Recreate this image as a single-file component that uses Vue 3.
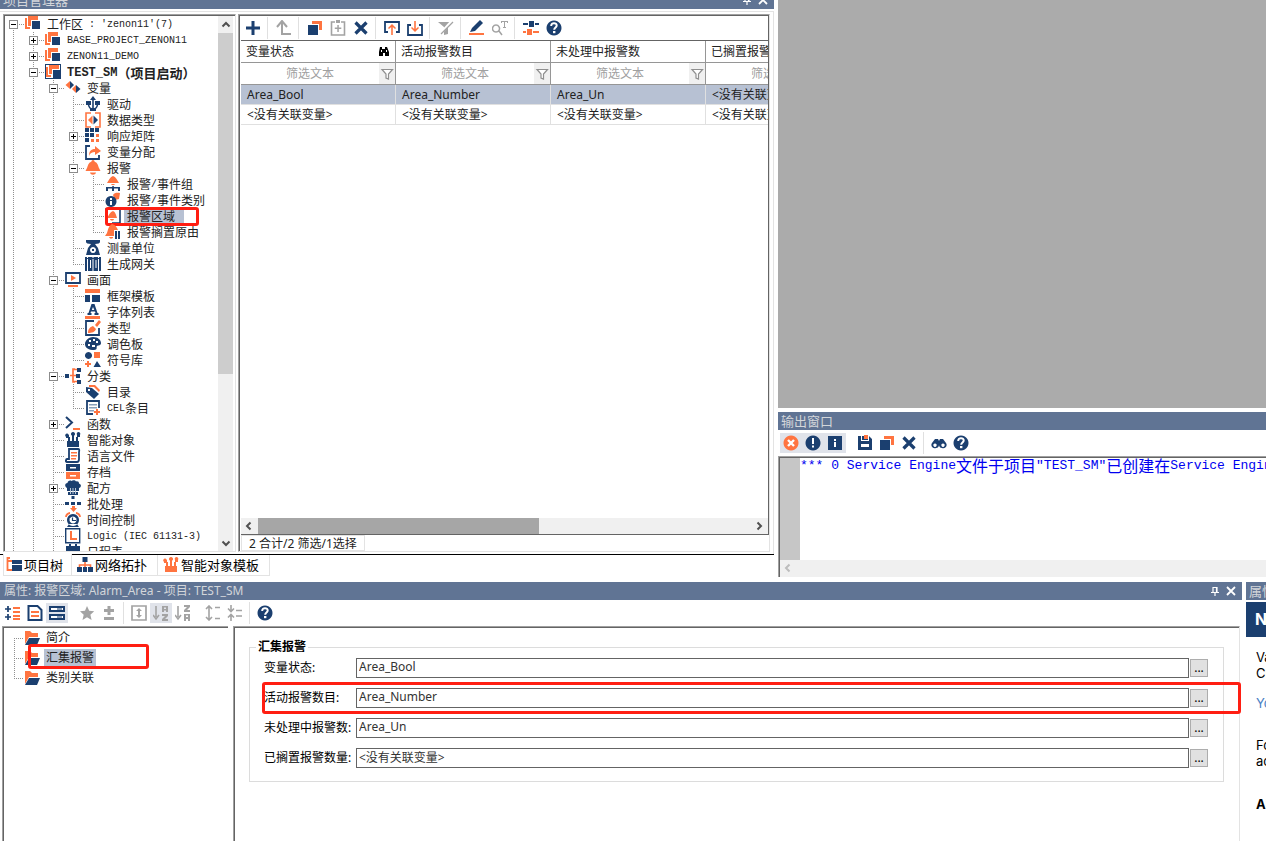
<script setup>
import { h, ref } from 'vue'

const N = '#1b3f6f'
const O = '#ff7440'
const G = '#a3a3a3'
const W = '#ffffff'

// Each icon is a list of [path, fill, stroke, strokeWidth] on a 16 x 16 grid.
const icons = {
  stack: [['M0 2h2v9h3v2H0z', O], ['M3 0h10v4H6v6H3z', O], ['M7 5h8v8H7z', N]],
  stackBox: [['M0 0h16v15H0z', N], ['M1 1h14v13H1z', W], ['M1 3h2v8h3v2H1z', O], ['M4 1h10v4H7v5H4z', O], ['M8 6h7v8H8z', N]],
  variable: [['M5 1 9 5 5 9z', N], ['M5 1v8L0.500 5z', O], ['M11 5l4.500 4-4.500 4z', N], ['M11 5v8L7 9z', O]],
  driver: [['M8 0l3 4H5z', N], ['M8 3v12M3.500 5v3c0 3 2 5 4.500 5M12.500 5v3c0 3-2 5-4.500 5', 'none', N, 1.6], ['M1 5h5v4H1zM10 5h5v4h-5zM5 13h6v2H5z', N]],
  datatype: [['M1 1h14v14H1z', W, O, 1.6], ['M6 0h4v2H6zM6 14h4v2H6z', W], ['M7.500 3.500v9L3 8z', O], ['M8.500 3.500v9L13 8z', N]],
  matrix: [['M0 0h4v4H0zM5 0h4v4H5zM10 0h4v4h-4zM0 5h4v4H0zM5 5h4v4H5zM0 10h4v4H0z', N], ['M11 6h3v3h-3zM6 11h3v3H6zM11 11h3v3h-3z', O]],
  assign: [['M5 2H1v13h13v-4', 'none', N, 1.8], ['M4 12c0-5 2-7 6-7V2l6 5-6 4V8c-3 0-5 1-6 4z', O]],
  bell: [['M8 0c1 0 1.500 1 1.500 1.500C13 3 13 6 14 8l1.500 3H.5L2 8c1-2 1-5 4.500-6.500C6.500 1 7 0 8 0zM5 12.500h6c-.5 3-5.500 3-6 0z', O]],
  bellGroup: [['M8 0c3 1 4 4 6 7H2c2-3 3-6 6-7zM6 8h4c-.5 1.500-3.500 1.500-4 0z', O], ['M7.300 10h1.500v1h6.200v4h-2v-2.500H9V15H7v-2.500H3V15H1v-4h6.300z', N]],
  bellInfo: [['M8 3c2-3 5-2 7-2l-1 6-4 1z', O], ['M6 4a5.500 5.500 0 1 0 .01 0z', N], ['M5 6h2v2H5zM5 9h2v4H5z', W]],
  bellArea: [['M1 9V1h14v14H7', 'none', N, 1.6], ['M8 3c2.500 1 3 4 4 7H2c2-3 3-6 6-7zM5 11h4c-.5 2-3.500 2-4 0z', O]],
  bellPause: [['M7 0c4 1 5 4 6 6H9v6H0l2-3c1-2 1-7 5-9zM4 13h4v1c-2 1-3 1-4-1z', O], ['M10 7h2v8h-2zM13 7h2v8h-2z', N]],
  scale: [['M1 0h14v2c0 1-2 2-5 2l3 4 2 7H1l2-7 3-4C3 4 1 3 1 2z', N], ['M8 7a3 3 0 1 0 .01 0z', W], ['M7 9h2v2H7z', N]],
  gateway: [['M0 1h2v14H0zM14 1h2v14h-2zM3 1h4.500v14H3zM8.500 1H13v14H8.500z', N], ['M5 4h1v8H5zM10.500 4h1v8h-1z', W], ['M2 2h12v1H2z', N]],
  screen: [['M1 1h14v10H1z', W, N, 1.8], ['M6 3l5 3-5 3z', O], ['M3 13h10v2H3z', O]],
  frame: [['M0 1h15v4H0z', O], ['M0 7h5v7H0zM7 7h8v7H7z', N]],
  font: [['M6.500 0h3l3 9h1v2H9.500V9h1l-.5-1.500H6L5.500 9h1v2H2.500V9h1zM8 3 6.800 6h2.500z', N], ['M0 12h15v3H0z', O]],
  style: [['M9 1H1v14h13V8', W, N, 1.8], ['M10 5l4-5 2 2-4 5zM3 13c0-4 2-6 5-7l3 3c-1 3-4 4-8 4z', O]],
  palette: [['M8 1c5 0 8 3 8 6s-3 2-4 3 1 4-3 4C4 14 0 12 0 8c0-3 3-7 8-7z', N], ['M4 4h2v2H4zM8 3h2v2H8zM11 5h2v2h-2zM3 8h2v2H3zM7 9h3v2H7z', W]],
  symbols: [['M3.500 0a3.500 3.500 0 1 0 .01 0zM12 9l4 6H8.500z', N], ['M9 0h6v6H9zM2 9h2v2h2v2H4v2H2v-2H0v-2h2z', O]],
  tree: [['M10 1H8v13h2M5 7.500h6M8 1.500h4M8 13.500h4', 'none', O, 1.7], ['M0 6h4v4H0zM12 0h4v4h-4zM11 6h4v4h-4zM12 12h4v4h-4z', N]],
  tag: [['M4 1h6l5 5-1 2-5-5H4z', O], ['M1 3l6 1 7 6-5 5L1 8z', N], ['M3 5h2v2H3z', W]],
  cel: [['M14 8V1H2v13h6', W, N, 1.8], ['M4 4h8v1.500H4zM4 7h8v1.500H4zM4 10h5v1.500H4z', '#8aa0bb'], ['M11 9h2v2h2v2h-2v2h-2v-2H9v-2h2z', O]],
  func: [['M1 1l6 5.500L1 12', 'none', N, 2], ['M8 12h7v2H8z', O]],
  smart: [['M2 9h12v6H2zM1 3h3v2h1v4H3V6H1zM7 3h2v6H7zM12 3h3v2h-2v4h-2V5h1z', N], ['M2 1.500a1.800 1.800 0 1 0 .01 0zM8 0a2 2 0 1 0 .01 0zM13.500 0a1.800 1.800 0 1 0 .01 0z', N]],
  smartOrange: [['M2 9h12v6H2zM1 3h3v2h1v4H3V6H1zM7 3h2v6H7zM12 3h3v2h-2v4h-2V5h1z', O], ['M2 1.500a1.800 1.800 0 1 0 .01 0zM8 0a2 2 0 1 0 .01 0zM13.500 0a1.800 1.800 0 1 0 .01 0z', O]],
  language: [['M4 1h9c2 0 1 2 1 4v6c0 2-1 3-2 3H2c-2 0-1-3 0-3h2z', W, N, 1.8], ['M6 4h6v1.500H6zM6 7h6v1.500H6zM6 10h5v1.500H6z', O]],
  archive: [['M1 0h14v7H1z', N], ['M1 8h14v7H1z', O], ['M5 3h6v1.500H5zM5 11h6v1.500H5z', W]],
  recipe: [['M2 8C-.5 7-.5 3 2.500 3c0-2 2.500-3 4-2 1-1 4-1 4.500.5C13 1 14 2 14 3.500c3 1 2 4 0 4.500v3H2zM3 12h10v3H3z', N], ['M5 8h1v6H5zM7.500 8h1v6h-1zM10 8h1v6h-1z', '#b9c5d4']],
  batch: [['M6.500 0h3v3h-3zM0 6h4v3H0zM6 6h4v3H6zM12 6h4v3h-4z', N], ['M7 10h3v2h2l-3.500 4L5 12h2z', O]],
  clock: [['M1 5c0-2 2-4 4-4M11 1c2 0 4 2 4 4', 'none', O, 1.8], ['M8 2a6 6 0 1 0 .01 0zM2 15l2-3h8l2 3z', N], ['M8 4.500a3.500 3.500 0 1 0 .01 0z', W], ['M7.500 5.500v3H11', 'none', N, 1.2]],
  logic: [['M0.700 0.700h14v14h-14z', W, N, 1.4], ['M5 3h2v7h5v2H5z', O]],
  schedule: [['M2 2h2V0h2v2h4V0h2v2h3v13H1V2z', N], ['M3 7h10v6H3z', W]],
  projectTree: [['M4 1H1.500v12H6M1.500 4H6', 'none', O, 1.8], ['M6 3h10v4H6zM6 8h10v6H6z', N], ['M6 7h10v1H6z', W]],
  topology: [['M8 5v5M2.500 11V8h11v3', 'none', O, 1.6], ['M5.500 0h5v5h-5zM0 10h5v5H0zM6 10h4v5H6zM11 10h5v5h-5z', N]],
  plus: [['M6.500 1h3v5.500H15v3H9.500V15h-3V9.500H1v-3h5.500z', N]],
  up: [['M1 7l5-6 5 6M6 1v13h9', 'none', G, 2]],
  copy: [['M1 5h10v10H1z', N], ['M5 1h10v9h-3V4H5z', O]],
  paste: [['M5 2H1.500v13h13V2H11', 'none', G, 1.6], ['M6 0h4v3H6zM7.300 5h1.500v2.500h2.500V9H8.800v3H7.300V9H4.800V7.500h2.500z', G]],
  cross: [['M2.500 2.500l11 11M13.500 2.500l-11 11', 'none', N, 3.2]],
  exportUp: [['M4 12H1V2h14v10h-3', 'none', N, 1.8], ['M8 4l4 4-1 1-2.200-2v8H7.200V7L5 9 4 8z', O]],
  importDown: [['M4 5H1v10h14V5h-3', 'none', N, 1.8], ['M8 12 4 8l1-1 2.200 2V1h1.600v8L11 7l1 1z', O]],
  noFilter: [['M0 2h15l-5 5v7l-4 1V7z', G], ['M1 15 14 1', 'none', W, 2.6], ['M3 14 15 2', 'none', G, 1.2]],
  pencil: [['M1 12l2-4 8-8 3 3-8 8z', N], ['M0 13h15v2H0z', O]],
  searchText: [['M4 5a3.500 3.500 0 1 0 .01 0zM7 11l3 4', 'none', G, 1.5], ['M9 1h7v2h-1V2h-2v5h1v1h-3V7h1V2h-2v1H9z', G]],
  sliders: [['M0 3h5v2H0zM6 1h5v6H6zM12 3h4v2h-4z', N], ['M0 11h3v2H0zM4 9h5v6H4zM10 11h6v2h-6z', O]],
  help: [['M8 0.500a7.500 7.500 0 1 0 .01 0z', N], ['M5.200 6c0-4 5.800-3.500 5.500-.3C10.500 7.500 8.200 7.500 8.200 9.800', 'none', W, 2], ['M7 11h2.400v2.200H7z', W]],
  error: [['M8 0.500a7.500 7.500 0 1 0 .01 0z', O], ['M5 5l6 6M11 5l-6 6', 'none', W, 2.4]],
  warn: [['M8 0.500a7.500 7.500 0 1 0 .01 0z', N], ['M7 3h2v6H7zM7 10.500h2v2H7z', W]],
  info: [['M1 1h14v14H1z', N], ['M7 4h2v2H7zM7 7h2v5H7z', W]],
  save: [['M1 1h3v5h8V1l3 3v11H1zM5 1h6v4H5z', N], ['M7 0h4v4H7z', O], ['M4 9h8v3H4z', W]],
  binoculars: [['M4 4h3l1 2 1-2h3l3 4c2 3-1 6-4 5-2 0-3-2-3-3 0 1-1 3-3 3-3 1-6-2-4-5z', N], ['M4 8.500a1.700 1.700 0 1 0 .01 0zM12 8.500a1.700 1.700 0 1 0 .01 0z', W]],
  findSmall: [['M5 3h2v2h3V3h2l2 5v4h-4V9H8v3H4V8z', '#000'], ['M6 6h1v2H6zM11 6h1v2h-1z', W]],
  funnel: [['M3 3.500h10.500L9.500 8v5l-2.500-1V8z', W, '#8f8f8f', 1.2]],
  listPlus: [['M0 4h6M3 1v6M0 12h6M3 9v6', 'none', N, 1.7], ['M8 2h7v2H8zM8 6h7v2H8zM8 10h7v2H8zM8 13h7v2H8z', O]],
  page: [['M1.500 1h9l4 4v10h-13z', W, N, 2], ['M4 6h8v2H4zM4 10h8v2H4z', O]],
  panels: [['M1 2h14v4H1zM1 10h14v4H1z', W, N, 2], ['M8 3.500h5v1H8zM8 11.500h5v1H8z', N]],
  star: [['M8 1l2.200 4.800 5 .5-3.800 3.500 1.200 5.200L8 12.300 3.500 15l1.200-5.200L1 6.300l5-.5z', G]],
  plusMinus: [['M6.500 1h3v3H13v3H9.500v3h-3V7H3V4h3.500zM3 12h10v3H3z', G]],
  expandBox: [['M1 1h14v14H1z', 'none', G, 1.7], ['M8 3l3 3H9v4h2l-3 3-3-3h2V6H5z', G]],
  sortAZ: [['M3 1v11M0 10l3 4 3-4', 'none', G, 1.6], ['M9 1h6v6h-2V5.500h-2V7H9zM11 2.500v1.500h2V2.500zM9 9h6v2l-3 3h3v2H9v-2l3-3H9z', G]],
  sortZA: [['M3 1v11M0 10l3 4 3-4', 'none', G, 1.6], ['M9 0h6v2l-3 3h3v2H9V5l3-3H9zM9 9h6v7h-2v-2h-2v2H9zM11 10.500V12h2v-1.500z', G]],
  expandAll: [['M4 2v12M1 4l3-3 3 3M1 12l3 3 3-3M10 2.500h5M10 13.500h5', 'none', G, 1.6]],
  collapseAll: [['M4 0v6M1 3.500l3 3 3-3M4 16v-6M1 12.500l3-3 3 3M9 5.500h6M9 11h6', 'none', G, 1.6]],
  folder: [['M1 1h5l2 2h6v4H5l-4 7z', O], ['M5 8h11l-3 7H1z', N]],
  pin: [['M6 4.500h4v5H6zM9.500 4.500v5M4 9.500h8M8 10v3', 'none', W, 1.2]],
  close: [['M4 4l8 8M12 4l-8 8', 'none', W, 1.8]],
  left: [['M9.500 4.500 6 8l3.500 3.500', 'none', '#505050', 2]],
  right: [['M6.500 4.500 10 8l-3.500 3.500', 'none', '#505050', 2]],
  leftPale: [['M9.500 4.500 6 8l3.500 3.500', 'none', '#bdbdbd', 2]],
  upArrow: [['M4.500 9.500 8 6l3.500 3.500', 'none', '#505050', 2]],
  downArrow: [['M4.500 6.500 8 10l3.500-3.500', 'none', '#505050', 2]],
}

const SvgIcon = (props) =>
  h(
    'svg',
    { class: 'icon', width: 16, height: 16, viewBox: '0 0 16 16', 'aria-hidden': 'true' },
    icons[props.name].map(([d, fill, stroke, width]) => h('path', { d, fill, stroke, 'stroke-width': width })),
  )
SvgIcon.props = ['name']

const treeRows = [
  { level: 0, icon: 'stack', text: "工作区 : 'zenon11'(7)", box: '-', first: true },
  { level: 1, icon: 'stack', text: 'BASE_PROJECT_ZENON11', box: '+' },
  { level: 1, icon: 'stack', text: 'ZENON11_DEMO', box: '+' },
  { level: 1, icon: 'stackBox', text: 'TEST_SM（项目启动）', box: '-', bold: true },
  { level: 2, icon: 'variable', text: '变量', box: '-' },
  { level: 3, icon: 'driver', text: '驱动' },
  { level: 3, icon: 'datatype', text: '数据类型' },
  { level: 3, icon: 'matrix', text: '响应矩阵', box: '+' },
  { level: 3, icon: 'assign', text: '变量分配' },
  { level: 3, icon: 'bell', text: '报警', box: '-' },
  { level: 4, icon: 'bellGroup', text: '报警/事件组' },
  { level: 4, icon: 'bellInfo', text: '报警/事件类别' },
  { level: 4, icon: 'bellArea', text: '报警区域', selected: true },
  { level: 4, icon: 'bellPause', text: '报警搁置原由', last: true },
  { level: 3, icon: 'scale', text: '测量单位' },
  { level: 3, icon: 'gateway', text: '生成网关', last: true },
  { level: 2, icon: 'screen', text: '画面', box: '-' },
  { level: 3, icon: 'frame', text: '框架模板' },
  { level: 3, icon: 'font', text: '字体列表' },
  { level: 3, icon: 'style', text: '类型' },
  { level: 3, icon: 'palette', text: '调色板' },
  { level: 3, icon: 'symbols', text: '符号库', last: true },
  { level: 2, icon: 'tree', text: '分类', box: '-' },
  { level: 3, icon: 'tag', text: '目录' },
  { level: 3, icon: 'cel', text: 'CEL条目', last: true },
  { level: 2, icon: 'func', text: '函数', box: '+' },
  { level: 2, icon: 'smart', text: '智能对象' },
  { level: 2, icon: 'language', text: '语言文件' },
  { level: 2, icon: 'archive', text: '存档' },
  { level: 2, icon: 'recipe', text: '配方', box: '+' },
  { level: 2, icon: 'batch', text: '批处理' },
  { level: 2, icon: 'clock', text: '时间控制' },
  { level: 2, icon: 'logic', text: 'Logic (IEC 61131-3)' },
  { level: 2, icon: 'schedule', text: '日程表' },
]

// Splits a label into Latin and Chinese runs, which use different sizes.
const runs = (text) =>
  (text.match(/[\x20-\x7e]+|[^\x20-\x7e]+/g) || []).map((t) => ({ t, latin: /^[\x20-\x7e]/.test(t) }))

// A bar divides a toolbar, a blank leaves a gap, and a star marks a pressed button.
const gridTools = ['plus', '|', 'up', '|', 'copy', 'paste', 'cross', '|', 'exportUp', 'importDown', '|', 'noFilter', '|', 'pencil', 'searchText', '|', 'sliders', 'help']
const outputTools = ['error*', 'warn*', 'info*', ' ', 'save', 'copy', 'cross', '|', 'binoculars', 'help']
const propTools = ['listPlus', 'page', 'panels*', ' ', 'star', 'plusMinus', '|', 'expandBox', 'sortAZ*', 'sortZA', ' ', 'expandAll', 'collapseAll', '|', 'help']
const parse = (list) =>
  list.map((s) => ({ sep: s === '|' || s === ' ', line: s === '|', on: s.endsWith('*'), icon: s.replace('*', '') }))

const columns = ['变量状态', '活动报警数目', '未处理中报警数', '已搁置报警数量']
const none = '<没有关联变量>'
const tableRows = [
  ['Area_Bool', 'Area_Number', 'Area_Un', none],
  [none, none, none, none],
]
const tabs = [
  { icon: 'projectTree', text: '项目树' },
  { icon: 'topology', text: '网络拓扑' },
  { icon: 'smartOrange', text: '智能对象模板' },
]
const activeTab = ref(0)
const groups = ['简介', '汇集报警', '类别关联']
const fields = ref([
  { id: 'state', label: '变量状态:', value: 'Area_Bool' },
  { id: 'active', label: '活动报警数目:', value: 'Area_Number', marked: true },
  { id: 'open', label: '未处理中报警数:', value: 'Area_Un' },
  { id: 'shelved', label: '已搁置报警数量:', value: none },
])
const message = '*** 0 Service Engine文件于项目"TEST_SM"已创建在Service Engine'
</script>

<template>
  <div class="page">
    <div class="upper">
      <section class="manager">
        <header class="title">
          <span>项目管理器</span>
          <span class="title-buttons">
            <button aria-label="固定"><SvgIcon name="pin" /></button>
            <button aria-label="关闭"><SvgIcon name="close" /></button>
          </span>
        </header>
        <div class="manager-body">
          <div class="tree-box">
            <ul class="tree">
              <li v-for="row in treeRows" :key="row.text" class="tree-row">
                <span v-for="n in row.level" :key="n" class="guide line"></span>
                <span class="guide elbow" :class="{ first: row.first, last: row.last }">
                  <button v-if="row.box" class="expander" :class="{ closed: row.box === '+' }" :aria-label="row.text"></button>
                </span>
                <SvgIcon :name="row.icon" />
                <span class="tree-label" :class="{ bold: row.bold, selected: row.selected }">
                  <span v-for="(run, i) in runs(row.text)" :key="i" :class="{ latin: run.latin }">{{ run.t }}</span>
                </span>
                <i v-if="row.selected" class="mark tree-mark"></i>
              </li>
            </ul>
            <div class="vscroll">
              <button aria-label="向上"><SvgIcon name="upArrow" /></button>
              <div class="vtrack"><div class="vthumb"></div></div>
              <button aria-label="向下"><SvgIcon name="downArrow" /></button>
            </div>
          </div>
          <div class="list-box">
            <div class="list-frame">
              <div class="tools wide">
                <template v-for="(t, i) in parse(gridTools)" :key="i">
                  <span v-if="t.sep" class="sep" :class="{ line: t.line }"></span>
                  <button v-else :aria-label="t.icon"><SvgIcon :name="t.icon" /></button>
                </template>
              </div>
              <div class="table-view">
                <table>
                  <thead>
                    <tr>
                      <th v-for="(c, i) in columns" :key="c">
                        <div class="head-cell"><span>{{ c }}</span><SvgIcon v-if="i === 0" name="findSmall" /></div>
                      </th>
                    </tr>
                    <tr>
                      <td v-for="c in columns" :key="c">
                        <div class="filter-cell">
                          <input type="text" placeholder="筛选文本" :aria-label="c" />
                          <button aria-label="筛选"><SvgIcon name="funnel" /></button>
                        </div>
                      </td>
                    </tr>
                  </thead>
                  <tbody>
                    <tr v-for="(r, i) in tableRows" :key="i" :class="{ current: i === 0 }">
                      <td v-for="(v, j) in r" :key="j">{{ v }}</td>
                    </tr>
                  </tbody>
                </table>
              </div>
              <div class="hscroll">
                <button aria-label="向左"><SvgIcon name="left" /></button>
                <div class="htrack"><div class="hthumb"></div></div>
                <button aria-label="向右"><SvgIcon name="right" /></button>
              </div>
            </div>
            <div class="status"><span>2 合计/2 筛选/1选择</span></div>
          </div>
        </div>
        <nav class="tabs">
          <button v-for="(t, i) in tabs" :key="t.text" :class="{ active: activeTab === i }" @click="activeTab = i">
            <SvgIcon :name="t.icon" /><span>{{ t.text }}</span>
          </button>
        </nav>
      </section>

      <section class="side">
        <div class="canvas"></div>
        <div class="output">
          <header class="title">输出窗口</header>
          <div class="tools">
            <template v-for="(t, i) in parse(outputTools)" :key="i">
              <span v-if="t.sep" class="sep" :class="{ line: t.line }"></span>
              <button v-else :class="{ on: t.on }" :aria-label="t.icon"><SvgIcon :name="t.icon" /></button>
            </template>
          </div>
          <div class="output-box">
            <div class="output-text">
              <div class="gutter"></div>
              <p><span v-for="(run, i) in runs(message)" :key="i" :class="{ mono: run.latin }">{{ run.t }}</span></p>
            </div>
            <div class="output-scroll"><button aria-label="向左"><SvgIcon name="leftPale" /></button></div>
          </div>
        </div>
      </section>
    </div>

    <div class="lower">
      <section class="props">
        <header class="title small">
          <span>属性: 报警区域: Alarm_Area - 项目: TEST_SM</span>
          <span class="title-buttons">
            <button aria-label="固定"><SvgIcon name="pin" /></button>
            <button aria-label="关闭"><SvgIcon name="close" /></button>
          </span>
        </header>
        <div class="tools prop-tools">
          <template v-for="(t, i) in parse(propTools)" :key="i">
            <span v-if="t.sep" class="sep" :class="{ line: t.line }"></span>
            <button v-else :class="{ on: t.on }" :aria-label="t.icon"><SvgIcon :name="t.icon" /></button>
          </template>
        </div>
        <div class="props-body">
          <ul class="groups">
            <li v-for="(g, i) in groups" :key="g">
              <span class="guide elbow" :class="{ first: i === 0, last: i === 2 }"></span>
              <SvgIcon name="folder" />
              <span class="group-label" :class="{ selected: i === 1 }">{{ g }}</span>
              <i v-if="i === 1" class="mark group-mark"></i>
            </li>
          </ul>
          <div class="form">
            <fieldset>
              <legend>汇集报警</legend>
              <div v-for="f in fields" :key="f.id" class="field">
                <label :for="f.id">{{ f.label }}</label>
                <input :id="f.id" v-model="f.value" type="text" />
                <button :aria-label="f.label">...</button>
                <i v-if="f.marked" class="mark field-mark"></i>
              </div>
            </fieldset>
          </div>
        </div>
      </section>
      <aside class="help">
        <header class="title">属性</header>
        <h2>N</h2>
        <p>Va<br />Cl</p>
        <p><a href="#">Yo</a></p>
        <p class="apart">Fo<br />ac</p>
        <h3>Al</h3>
      </aside>
    </div>
  </div>
</template>

<style>
body {
  overflow: hidden;
  background: #fff;
}
</style>

<style scoped>
* {
  box-sizing: border-box;
}
.page {
  height: 100vh;
  display: flex;
  flex-direction: column;
  overflow: hidden;
  font: 12px/16px 'Noto Sans', 'Noto Sans CJK SC', sans-serif;
  color: #222;
  background: #fff;
}
button {
  padding: 0;
  border: 0;
  background: none;
  color: inherit;
  font: inherit;
}
ul {
  list-style: none;
  margin: 0;
  padding: 0;
}
:deep(.icon) {
  display: block;
  flex: none;
}
.upper {
  flex: 1;
  min-height: 0;
  display: grid;
  grid-template-columns: minmax(0, 774fr) minmax(0, 488fr);
  column-gap: 4px;
}
.title {
  display: flex;
  flex: none;
  justify-content: space-between;
  align-items: center;
  height: 18px;
  padding: 0 3px;
  overflow: hidden;
  white-space: nowrap;
  background: #607494;
  color: #d3d6da;
  font-size: 13px;
}
.title.small {
  padding-left: 4px;
  font-size: 12px;
}
.title-buttons {
  display: flex;
}
.mark {
  position: absolute;
  border: 3px solid #ff1e12;
  border-radius: 3px;
  pointer-events: none;
}

/* project manager */
.manager {
  display: flex;
  flex-direction: column;
  min-height: 0;
  margin-top: -9px;
}
.manager-body {
  flex: 1;
  min-height: 0;
  display: flex;
  gap: 2px;
  margin-top: 2px;
  padding: 2px 3px;
  border: solid #e3e3e3;
  border-width: 1px 1px 0 0;
}
.tree-box,
.list-box {
  border: solid #a0a0a0;
  border-width: 1px 0 0 1px;
  box-shadow: inset 1px 1px #646464;
}
.tree-box {
  flex: 0 0 233px;
  display: flex;
  padding: 1px 2px 0 1px;
  border-right: 1px solid #e3e3e3;
  border-bottom: 1px solid #e3e3e3;
}
.tree {
  flex: 1;
  overflow: hidden;
}
.tree-row {
  position: relative;
  display: flex;
  align-items: center;
  height: 16px;
  white-space: pre;
}
.guide {
  position: relative;
  flex: none;
  display: flex;
  align-items: center;
  width: 20px;
  height: 100%;
  padding-left: 4px;
}
.guide.line,
.guide.elbow {
  background-repeat: no-repeat;
  background-image: repeating-linear-gradient(#909090 0 1px, transparent 1px 2px);
  background-size: 1px 100%;
  background-position: 8px 0;
}
.guide.elbow {
  background-image: repeating-linear-gradient(#909090 0 1px, transparent 1px 2px),
    repeating-linear-gradient(90deg, #909090 0 1px, transparent 1px 2px);
  background-size: 1px 100%, 11px 1px;
  background-position: 8px 0, 8px 8px;
}
.guide.elbow.first {
  background-size: 1px 50%, 11px 1px;
  background-position: 8px 100%, 8px 8px;
}
.guide.elbow.last {
  background-size: 1px 50%, 11px 1px;
}
.expander {
  width: 9px;
  height: 9px;
  border: 1px solid #8c8c8c;
  background: linear-gradient(#000, #000) center / 5px 1px no-repeat #fff;
}
.expander.closed {
  background: linear-gradient(#000, #000) center / 5px 1px no-repeat,
    linear-gradient(#000, #000) center / 1px 5px no-repeat #fff;
}
.tree-label {
  display: flex;
  align-items: center;
  height: 16px;
  margin-left: 3px;
  padding: 2px 2px 0 3px;
}
.latin {
  font-family: 'Liberation Mono', monospace;
  font-size: 10px;
}
.bold {
  font-size: 13px;
  font-weight: 700;
}
.bold .latin {
  font-size: 12px;
}
.selected {
  background: #b7c1d3;
}
.tree-label.selected {
  padding-right: 9px;
}
.tree-mark {
  left: 100px;
  top: -1px;
  width: 94px;
  height: 19px;
}
.vscroll {
  flex: none;
  width: 15px;
  display: flex;
  flex-direction: column;
  background: #f0f0f0;
}
.vscroll button {
  height: 17px;
}
.vtrack {
  flex: 1;
}
.vthumb {
  height: 68%;
  background: #cdcdcd;
}
.list-box {
  flex: 1;
  min-width: 0;
  display: flex;
  flex-direction: column;
  padding: 1px 0 0 2px;
  border-right: 1px solid #e3e3e3;
  border-bottom: 1px solid #e3e3e3;
}
.list-frame {
  flex: 1;
  min-height: 0;
  display: flex;
  flex-direction: column;
  border-right: 1px solid #646464;
  border-bottom: 1px solid #646464;
}
.tools {
  display: flex;
  flex: none;
  align-items: center;
  height: 26px;
}
.tools button {
  display: grid;
  place-items: center;
  width: 22px;
  height: 20px;
}
.tools.wide {
  height: 24px;
}
.tools.wide button {
  width: 23px;
}
.tools button.on {
  background: #e0e3ea;
}
.sep {
  width: 8px;
  height: 22px;
}
.sep.line {
  background: linear-gradient(#e0e0e0, #e0e0e0) 3px 0 / 1px 100% no-repeat;
}
.table-view {
  flex: 1;
  min-height: 0;
  overflow: hidden;
  border-top: 1px solid #646464;
}
table {
  table-layout: fixed;
  width: 620px;
  border-collapse: separate;
  border-spacing: 0;
}
th,
td {
  padding: 0;
  font-weight: 400;
  text-align: left;
  white-space: nowrap;
}
thead th,
thead td {
  height: 22px;
  border: solid #969696;
  border-width: 0 1px 1px 0;
}
.head-cell {
  display: flex;
  align-items: center;
  justify-content: space-between;
  padding: 1px 4px 0 5px;
}
.filter-cell {
  display: flex;
  height: 21px;
}
.filter-cell input {
  flex: 1;
  min-width: 0;
  padding: 1px 0 0;
  border: 0;
  background: none;
  font: inherit;
  text-align: center;
}
.filter-cell input::placeholder {
  color: #a0a0a0;
}
.filter-cell button {
  display: grid;
  place-items: center;
  width: 16px;
  background: #f0f0f0;
}
tbody td {
  height: 20px;
  padding-left: 6px;
  border: solid #e0e0e0;
  border-width: 0 1px 1px 0;
}
.current td {
  background: #b7c1d3;
}
.hscroll {
  flex: none;
  display: flex;
  height: 16px;
  background: #f0f0f0;
}
.hscroll button {
  width: 17px;
}
.htrack {
  flex: 1;
}
.hthumb {
  width: 57%;
  height: 100%;
  background: #a6a6a6;
}
.status {
  flex: none;
  height: 16px;
}
.status span {
  display: inline-block;
  height: 16px;
  padding: 0 7px;
  border: 1px solid #e3e3e3;
  line-height: 15px;
}
.tabs {
  flex: none;
  display: flex;
  height: 28px;
  padding-left: 3px;
  border-top: 1px solid #000;
}
.tabs button {
  display: flex;
  align-items: center;
  gap: 2px;
  height: 21px;
  padding: 0 10px 0 5px;
  border: solid #e3e3e3;
  border-width: 0 1px 1px 0;
  color: #000;
  font-size: 13px;
}
.tabs button.active {
  height: 22px;
  margin-top: -1px;
  padding: 1px 8px 0 2px;
  border-left-width: 1px;
  background: #fff;
}

/* canvas and output */
.side {
  display: flex;
  flex-direction: column;
  min-height: 0;
}
.canvas {
  flex: 1;
  background: #ababab;
}
.output {
  flex: none;
  display: flex;
  flex-direction: column;
  height: 170px;
  margin-top: 4px;
}
.output .tools {
  padding-left: 2px;
}
.output-box {
  height: 121px;
  display: flex;
  flex-direction: column;
  border: solid #a0a0a0;
  border-width: 1px 0 0 1px;
  box-shadow: inset 1px 1px #646464;
  padding: 1px 0 0 1px;
}
.output-text {
  flex: 1;
  display: flex;
  overflow: hidden;
}
.gutter {
  flex: 0 0 20px;
  background: #c6c6c6;
}
.output-text p {
  display: flex;
  align-items: center;
  height: 16px;
  margin: 0;
  white-space: pre;
  color: #0000f0;
  font-size: 16px;
  line-height: 14px;
}
.mono {
  font-family: 'Liberation Mono', monospace;
  font-size: 13px;
  line-height: 16px;
}
.output-scroll {
  flex: none;
  height: 17px;
  background: #f0f0f0;
}

/* properties */
.lower {
  flex: none;
  display: flex;
  gap: 4px;
  height: 259px;
}
.props {
  flex: 1;
  min-width: 0;
  display: flex;
  flex-direction: column;
}
.prop-tools {
  padding-left: 2px;
}
.props-body {
  flex: 1;
  display: flex;
  gap: 5px;
  padding: 0 2px;
}
.groups {
  flex: 0 0 226px;
  padding: 1px 0 0 1px;
}
.groups,
.form {
  border: solid #a0a0a0;
  border-width: 1px 0 0 1px;
  box-shadow: inset 1px 1px #646464;
}
.groups li {
  position: relative;
  display: flex;
  align-items: center;
  height: 20px;
}
.groups .guide {
  background-position: 10px 0, 10px 10px;
}
.groups .guide.first {
  background-position: 10px 100%, 10px 10px;
}
.group-label {
  margin-left: 4px;
  padding: 1px 2px;
}
.group-mark {
  left: 24px;
  top: -4px;
  width: 121px;
  height: 25px;
}
.form {
  flex: 1;
  padding: 10px 15px 0;
  border-right: 1px solid #e3e3e3;
}
fieldset {
  min-width: 0;
  margin: 0;
  padding: 1px 14px 3px;
  border: 1px solid #dcdcdc;
}
legend {
  margin-left: -8px;
  padding: 0 2px;
  color: #000;
  font-weight: 700;
  line-height: 20px;
}
.field {
  position: relative;
  display: flex;
  align-items: center;
  height: 20px;
  margin-bottom: 10px;
}
.field label {
  flex: 0 0 92px;
  color: #000;
}
.field input {
  flex: 1;
  min-width: 0;
  height: 20px;
  padding: 0 2px 3px;
  border: 1px solid #646464;
  background: #fff;
  color: #333;
  font: inherit;
}
.field button {
  width: 18px;
  height: 18px;
  margin: 0 1px;
  border: 1px solid #adadad;
  background: #e1e1e1;
  color: #000;
}
.field-mark {
  inset: -6px -32px -6px -2px;
}

/* help */
.help {
  flex: 0 0 20px;
  overflow: hidden;
  font: 13px/16px Inter, 'Noto Sans CJK SC', sans-serif;
  color: #000;
  white-space: nowrap;
}
.help h2 {
  margin: 2px 0 12px;
  padding-left: 9px;
  background: #1b3f6f;
  color: #fff;
  font-size: 16px;
  line-height: 35px;
}
.help p {
  margin: 0 0 14px;
  padding-left: 10px;
}
.help p.apart {
  margin-top: 26px;
}
.help a {
  color: #4a7fc4;
  text-decoration: none;
}
.help h3 {
  margin: 27px 0 0;
  padding-left: 10px;
  font-size: 13px;
}
</style>
